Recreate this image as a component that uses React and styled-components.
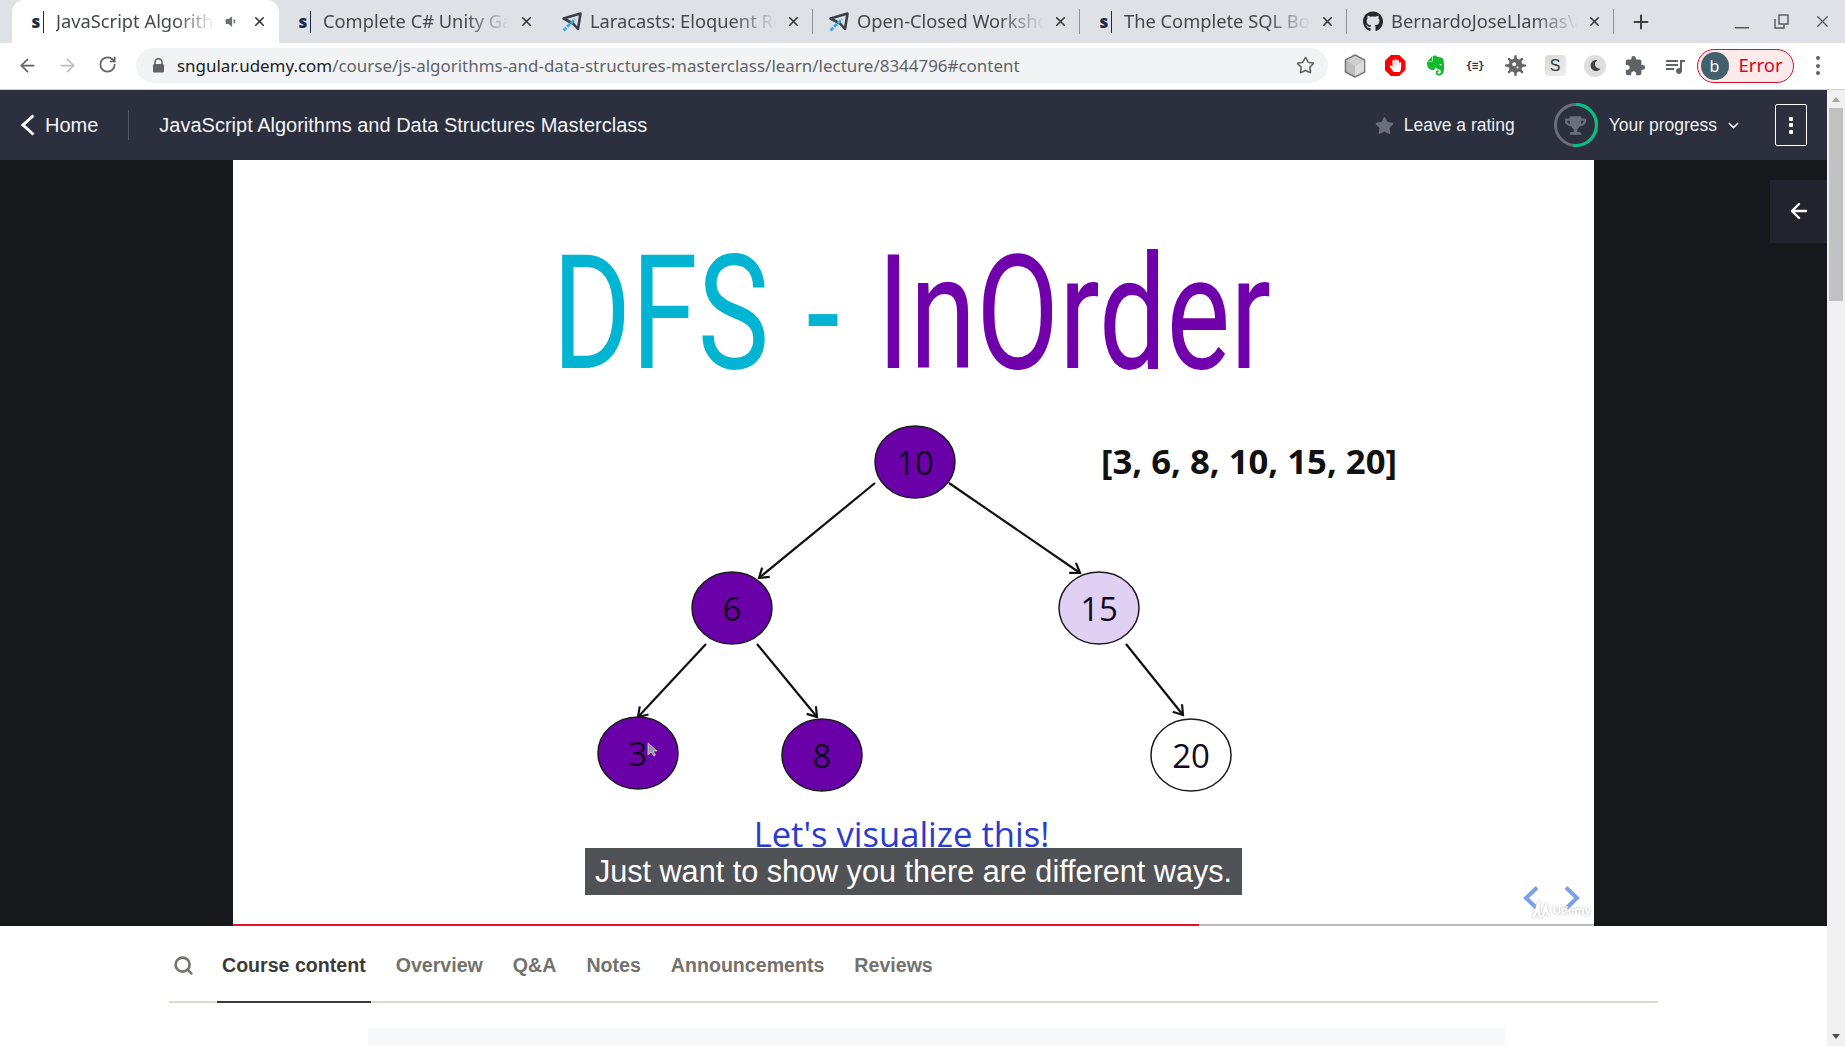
import React from 'react';
import styled, { createGlobalStyle } from 'styled-components';
import { ArrowLeft, ArrowRight, RotateCw, Star, Plus, X, ChevronDown, Search } from 'lucide-react';
import { FaEvernote, FaGithub, FaStar, FaTrophy, FaVirus, FaHandPaper, FaMoon, FaVolumeDown } from 'react-icons/fa';
import { MdQueueMusic, MdExtension } from 'react-icons/md';

const GlobalStyle = createGlobalStyle`
  html, body {
    margin: 0;
    padding: 0;
    background: #fff;
    overflow: hidden;
  }
  * {
    box-sizing: border-box;
  }
`;

const Page = styled.div`
  width: 1845px;
  height: 1046px;
  overflow: hidden;
  display: flex;
  flex-direction: column;
  font-family: 'Liberation Sans', Arial, sans-serif;
`;

/* browser chrome */
const TabStrip = styled.div`
  height: 43px;
  background: #dee1e6;
  display: flex;
  align-items: stretch;
  padding-left: 12px;
  flex-shrink: 0;
`;

const Tab = styled.div`
  position: relative;
  width: 267px;
  display: flex;
  align-items: center;
  padding-left: 16px;
  padding-right: 12px;
  background: ${(p) => (p.$active ? '#fff' : 'transparent')};
  border-radius: ${(p) => (p.$active ? '12px 12px 0 0' : '0')};
  &::after {
    content: '';
    display: ${(p) => (p.$divider ? 'block' : 'none')};
    position: absolute;
    right: 0;
    top: 9px;
    height: 25px;
    width: 1px;
    background: #8f9297;
  }
`;

const FavBox = styled.span`
  width: 20px;
  height: 22px;
  flex-shrink: 0;
  margin-right: 8px;
  display: flex;
  align-items: center;
  justify-content: center;
  color: #24292e;
`;

const SFav = styled.span`
  font-family: 'Open Sans', sans-serif;
  font-weight: 800;
  font-size: 17px;
  line-height: 22px;
  color: #1c2a48;
  padding-right: 3px;
  border-right: 1.5px solid #1c2a48;
`;

const TabTitle = styled.span`
  flex: 1;
  min-width: 0;
  overflow: hidden;
  white-space: nowrap;
  padding-bottom: 2px;
  font-family: 'Noto Sans', sans-serif;
  font-size: 18.3px;
  color: #45474b;
  -webkit-mask-image: linear-gradient(to right, #000 76%, transparent 100%);
  mask-image: linear-gradient(to right, #000 76%, transparent 100%);
`;

const TabSound = styled.span`
  width: 14px;
  margin: 0 5px 0 9px;
  display: flex;
  color: #6a6d71;
`;

const TabClose = styled.span`
  width: 16px;
  margin-left: 8px;
  display: flex;
  justify-content: center;
  color: #35373a;
`;

const NewTab = styled.div`
  width: 54px;
  display: flex;
  align-items: center;
  justify-content: center;
  color: #3c4043;
`;

const WindowControls = styled.div`
  margin-left: auto;
  display: flex;
  align-items: center;
  color: #55585c;
`;

const WindowButton = styled.span`
  width: ${(p) => p.$width}px;
  margin-left: ${(p) => p.$gap || 0}px;
  display: flex;
  justify-content: center;
`;

const Toolbar = styled.div`
  height: 47px;
  flex-shrink: 0;
  background: #fff;
  border-bottom: 1px solid #d0d1d3;
  display: flex;
  align-items: center;
  padding-bottom: 1px;
`;

const NavButtons = styled.div`
  width: 136px;
  flex-shrink: 0;
  padding-left: 7px;
  display: flex;
  color: #5f6368;
`;

const NavButton = styled.span`
  width: 40px;
  display: flex;
  justify-content: center;
  color: ${(p) => (p.$off ? '#bcbec1' : '#5f6368')};
`;

const Omnibox = styled.div`
  width: 1192px;
  height: 35px;
  flex-shrink: 0;
  background: #f1f3f4;
  border-radius: 18px;
  display: flex;
  align-items: center;
  padding: 0 13px 0 16px;
`;

const LockIcon = styled.svg`
  width: 13px;
  height: 15px;
  margin-right: 12px;
  flex-shrink: 0;
`;

const UrlText = styled.div`
  flex: 1;
  white-space: nowrap;
  font-family: 'Noto Sans', sans-serif;
  font-size: 16.95px;
  color: #5f6368;
`;

const UrlHost = styled.span`
  color: #202124;
`;

const Extensions = styled.div`
  margin-left: 7px;
  display: flex;
  align-items: center;
`;

const ExtSlot = styled.span`
  width: 40px;
  height: 24px;
  display: flex;
  align-items: center;
  justify-content: center;
  color: ${(p) => p.$color || '#666'};
`;

const StopSign = styled.span`
  width: 21px;
  height: 21px;
  display: flex;
  align-items: center;
  justify-content: center;
  background: #f00;
  color: #fff;
  clip-path: polygon(30% 0, 70% 0, 100% 30%, 100% 70%, 70% 100%, 30% 100%, 0 70%, 0 30%);
`;

const BraceGlyph = styled.span`
  font-family: 'DejaVu Sans Mono', monospace;
  font-size: 11px;
  font-weight: 700;
  color: #333;
  white-space: nowrap;
  letter-spacing: -0.5px;
`;

const SBadge = styled.span`
  width: 21px;
  height: 21px;
  border-radius: 4px;
  background: linear-gradient(135deg, #d8d8d8, #f0f0f0);
  color: #333;
  font-size: 16px;
  display: flex;
  align-items: center;
  justify-content: center;
`;

const MoonBadge = styled.span`
  width: 22px;
  height: 22px;
  border-radius: 50%;
  background: #dedede;
  color: #444;
  display: flex;
  align-items: center;
  justify-content: center;
`;

const ProfilePill = styled.div`
  margin-left: 2px;
  width: 97px;
  height: 34px;
  border-radius: 17px;
  background: #fdeaea;
  border: 1.5px solid #d9102a;
  display: flex;
  align-items: center;
  padding-left: 2.5px;
`;

const Avatar = styled.span`
  width: 28px;
  height: 28px;
  border-radius: 50%;
  background: #44606f;
  color: #fff;
  font-family: 'Noto Sans', sans-serif;
  font-size: 16px;
  display: flex;
  align-items: center;
  justify-content: center;
`;

const ProfileLabel = styled.span`
  margin-left: 10px;
  padding-bottom: 2px;
  font-family: 'Noto Sans', sans-serif;
  font-size: 18.5px;
  color: #d9031d;
`;

const MenuDots = styled.span`
  width: 4px;
  margin-left: 22px;
  display: flex;
  flex-direction: column;
  gap: 3.5px;
  & > i {
    display: block;
    width: 4px;
    height: 4px;
    border-radius: 50%;
    background: #5f6368;
  }
`;

/* page below the chrome */
const BodyRow = styled.div`
  flex: 1;
  min-height: 0;
  display: flex;
`;

const Content = styled.div`
  flex: 1;
  min-width: 0;
  display: flex;
  flex-direction: column;
  overflow: hidden;
`;

const CourseHeader = styled.header`
  height: 70px;
  flex-shrink: 0;
  background: #2c2f3d;
  color: #f4f4f6;
  display: flex;
  align-items: center;
  padding: 0 20px;
`;

const HomeLink = styled.div`
  display: flex;
  align-items: center;
  gap: 9px;
  font-size: 20px;
  padding-right: 30px;
  height: 30px;
  border-right: 1px solid #555866;
`;

const CourseTitle = styled.div`
  margin-left: 30px;
  font-size: 20px;
`;

const HeaderRight = styled.div`
  margin-left: auto;
  display: flex;
  align-items: center;
  font-size: 17.5px;
`;

const RatingLink = styled.div`
  display: flex;
  align-items: center;
  gap: 10px;
  color: #f0f0f2;
  & > svg {
    color: #6a6f7d;
  }
`;

const ProgressLink = styled.div`
  margin-left: 39px;
  display: flex;
  align-items: center;
  color: #f0f0f2;
`;

const ProgressRing = styled.div`
  position: relative;
  width: 44px;
  height: 44px;
  margin-right: 11px;
  display: flex;
  align-items: center;
  justify-content: center;
  color: #6a6f7d;
  & > svg:first-child {
    position: absolute;
    inset: 0;
  }
`;

const ProgressCaret = styled.span`
  margin-left: 8px;
  margin-right: 33px;
  display: flex;
`;

const KebabButton = styled.div`
  width: 32px;
  height: 42px;
  border: 1px solid #fff;
  border-radius: 2px;
  display: flex;
  flex-direction: column;
  align-items: center;
  justify-content: center;
  gap: 2.5px;
  & > i {
    display: block;
    width: 4px;
    height: 4px;
    background: #fff;
    border-radius: 1px;
  }
`;

const VideoArea = styled.section`
  position: relative;
  height: 766px;
  flex-shrink: 0;
  background: #17181c;
  display: flex;
  justify-content: center;
`;

const SidebarToggle = styled.div`
  position: absolute;
  top: 20px;
  right: 0;
  width: 57px;
  height: 63px;
  padding-bottom: 2px;
  background: #21242c;
  color: #fff;
  display: flex;
  align-items: center;
  justify-content: center;
`;

const Slide = styled.div`
  position: relative;
  width: 1361px;
  background: #fff;
  overflow: hidden;
  display: flex;
  flex-direction: column;
  align-items: center;
`;

const SlideTitle = styled.div`
  margin-top: 74px;
  height: 160px;
  line-height: 160px;
  padding-right: 5px;
  font-family: Roboto, sans-serif;
  font-size: 160px;
  font-weight: 400;
  white-space: nowrap;
  word-spacing: 10px;
  transform: scaleX(0.752);
  color: #00b4d2;
`;

const TitleAccent = styled.span`
  color: #7000ab;
`;

const Tree = styled.svg`
  margin-top: 26px;
  width: 1361px;
  height: 380px;
  flex-shrink: 0;
  display: block;
`;

const SlideNote = styled.div`
  margin-top: 12px;
  padding-right: 24px;
  font-family: 'Open Sans', sans-serif;
  font-size: 34.6px;
  line-height: 44px;
  color: #2a3bcf;
  white-space: nowrap;
`;

const Caption = styled.div`
  position: absolute;
  left: 352px;
  top: 688px;
  width: 657px;
  height: 47px;
  background: #515256;
  color: #fff;
  font-size: 30.6px;
  line-height: 47px;
  text-align: center;
  white-space: nowrap;
`;

const SlideArrows = styled.svg`
  position: absolute;
  right: 14px;
  bottom: 16px;
  width: 57px;
  height: 24px;
`;

const Watermark = styled.div`
  position: absolute;
  right: 3px;
  bottom: 6px;
  display: flex;
  align-items: center;
  gap: 2px;
  font-size: 11.5px;
  font-weight: 700;
  color: #fff;
  text-shadow: 0 0 3px #aaa;
  & > svg {
    filter: drop-shadow(0 0 1px #aaa);
  }
`;

const ProgressTrack = styled.div`
  position: absolute;
  left: 0;
  right: 0;
  bottom: 0;
  height: 2px;
  background: #bbb;
`;

const ProgressFill = styled.div`
  height: 100%;
  background: #e0102a;
`;

const TabsNav = styled.nav`
  margin: 0 169px;
  height: 77px;
  flex-shrink: 0;
  border-bottom: 2px solid #dcdacb;
  display: flex;
  align-items: stretch;
  gap: 20px;
`;

const SearchSlot = styled.div`
  width: 28px;
  padding-left: 4px;
  padding-top: 3px;
  display: flex;
  align-items: center;
  color: #73726c;
`;

const NavItem = styled.div`
  padding: 3px 5px 0;
  margin-bottom: -2px;
  display: flex;
  align-items: center;
  font-size: 19.6px;
  font-weight: 700;
  color: ${(p) => (p.$active ? '#3c3b37' : '#73726c')};
  border-bottom: 2px solid ${(p) => (p.$active ? '#3c3b37' : 'transparent')};
`;

const ContentStub = styled.div`
  margin: 25px 0 0 368px;
  width: 1137px;
  height: 40px;
  flex-shrink: 0;
  background: #f7f8fa;
`;

const Scrollbar = styled.div`
  width: 18px;
  flex-shrink: 0;
  background: #f1f1f1;
  display: flex;
  flex-direction: column;
  align-items: center;
`;

const ScrollUp = styled.div`
  margin-top: 7px;
  width: 0;
  height: 0;
  border-left: 4.5px solid transparent;
  border-right: 4.5px solid transparent;
  border-bottom: 5px solid #a3a3a3;
`;

const ScrollThumb = styled.div`
  margin-top: 6px;
  width: 14px;
  height: 193px;
  background: #c1c1c1;
`;

const ScrollDown = styled.div`
  margin-top: auto;
  margin-bottom: 7px;
  width: 0;
  height: 0;
  border-left: 4.5px solid transparent;
  border-right: 4.5px solid transparent;
  border-top: 5px solid #505050;
`;

const PlaneIcon = () => (
  <svg width="20" height="20" viewBox="0 0 20 20" fill="none">
    <path d="M1.5 6.5 L18.5 1.5 L16 17 L11 11.5 Z" stroke="#3a4048" strokeWidth="2.6" strokeLinejoin="round" />
    <path d="M1.5 18.5 L13 7" stroke="#3da8f0" strokeWidth="2.8" strokeDasharray="4 1.2" />
  </svg>
);

const CubeIcon = () => (
  <svg width="22" height="24" viewBox="0 0 22 24">
    <path d="M11 1 L20.5 6 V18 L11 23 L1.5 18 V6 Z" fill="#bdbdbd" stroke="#777" strokeWidth="1.6" strokeLinejoin="round" />
    <path d="M11 12 L20 6.5 V17.5 L11 22 Z" fill="#dcdcdc" />
    <path d="M11 12 L2 6.5 L11 2 L20 6.5 Z" fill="#cfcfcf" />
  </svg>
);

const RestoreIcon = () => (
  <svg width="15" height="15" viewBox="0 0 15 15" fill="none" stroke="#55585c" strokeWidth="1.4">
    <rect x="5" y="1" width="9" height="9" />
    <path d="M1 5 V14 H10 V10" />
  </svg>
);

const tabs = [
  { title: 'JavaScript Algorithms and Data', fav: 's', active: true },
  { title: 'Complete C# Unity Game Developer', fav: 's' },
  { title: 'Laracasts: Eloquent Relationships', fav: 'plane', divider: true },
  { title: 'Open-Closed Workshop Series', fav: 'plane', divider: true },
  { title: 'The Complete SQL Bootcamp', fav: 's', divider: true },
  { title: 'BernardoJoseLlamas\\algorithms', fav: 'github', divider: true },
];

const nodes = [
  { x: 915, y: 462, label: '10', fill: '#6a00a8' },
  { x: 732, y: 608, label: '6', fill: '#6a00a8' },
  { x: 1099, y: 608, label: '15', fill: '#e0d0f3' },
  { x: 638, y: 753, label: '3', fill: '#6a00a8' },
  { x: 822, y: 755, label: '8', fill: '#6a00a8' },
  { x: 1191, y: 755, label: '20', fill: '#fff' },
];

const edges = [
  [875, 483, 759, 578],
  [949, 483, 1080, 573],
  [706, 644, 638, 717],
  [757, 644, 817, 717],
  [1126, 644, 1183, 715],
];

const navItems = ['Course content', 'Overview', 'Q&A', 'Notes', 'Announcements', 'Reviews'];

const renderFav = (fav) => {
  if (fav === 's') return <SFav>s</SFav>;
  if (fav === 'plane') return <PlaneIcon />;
  return <FaGithub size={21} />;
};

export default function App() {
  return (
    <Page>
      <GlobalStyle />
      <TabStrip>
        {tabs.map((tab) => (
          <Tab key={tab.title} $active={tab.active} $divider={tab.divider}>
            <FavBox>{renderFav(tab.fav)}</FavBox>
            <TabTitle>{tab.title}</TabTitle>
            {tab.active && (
              <TabSound>
                <FaVolumeDown size={13} />
              </TabSound>
            )}
            <TabClose>
              <X size={15} strokeWidth={2.6} />
            </TabClose>
          </Tab>
        ))}
        <NewTab>
          <Plus size={22} strokeWidth={2.2} />
        </NewTab>
        <WindowControls>
          <WindowButton $width={34}>
            <svg width="14" height="16" viewBox="0 0 14 16">
              <rect x="0" y="13" width="14" height="1.5" fill="#55585c" />
            </svg>
          </WindowButton>
          <WindowButton $width={34} $gap={5}>
            <RestoreIcon />
          </WindowButton>
          <WindowButton $width={46} $gap={1}>
            <X size={19} strokeWidth={1.6} />
          </WindowButton>
        </WindowControls>
      </TabStrip>

      <Toolbar>
        <NavButtons>
          <NavButton>
            <ArrowLeft size={21} strokeWidth={2} />
          </NavButton>
          <NavButton $off>
            <ArrowRight size={21} strokeWidth={2} />
          </NavButton>
          <NavButton>
            <RotateCw size={19} strokeWidth={2.2} />
          </NavButton>
        </NavButtons>
        <Omnibox>
          <LockIcon viewBox="0 0 13 15">
            <path d="M3 6 V4.2 a3.5 3.5 0 0 1 7 0 V6" fill="none" stroke="#5f6368" strokeWidth="1.6" />
            <rect x="1" y="6" width="11" height="8.5" rx="1.2" fill="#5f6368" />
          </LockIcon>
          <UrlText>
            <UrlHost>sngular.udemy.com</UrlHost>/course/js-algorithms-and-data-structures-masterclass/learn/lecture/8344796#content
          </UrlText>
          <Star size={19} strokeWidth={2} color="#5f6368" />
        </Omnibox>
        <Extensions>
          <ExtSlot>
            <CubeIcon />
          </ExtSlot>
          <ExtSlot>
            <StopSign>
              <FaHandPaper size={13} />
            </StopSign>
          </ExtSlot>
          <ExtSlot $color="#14b92e">
            <FaEvernote size={23} />
          </ExtSlot>
          <ExtSlot>
            <BraceGlyph>{'{≡}'}</BraceGlyph>
          </ExtSlot>
          <ExtSlot>
            <FaVirus size={21} />
          </ExtSlot>
          <ExtSlot>
            <SBadge>S</SBadge>
          </ExtSlot>
          <ExtSlot>
            <MoonBadge>
              <FaMoon size={11} />
            </MoonBadge>
          </ExtSlot>
          <ExtSlot $color="#5f6368">
            <MdExtension size={22} />
          </ExtSlot>
          <ExtSlot $color="#5f6368">
            <MdQueueMusic size={24} />
          </ExtSlot>
        </Extensions>
        <ProfilePill>
          <Avatar>b</Avatar>
          <ProfileLabel>Error</ProfileLabel>
        </ProfilePill>
        <MenuDots>
          <i />
          <i />
          <i />
        </MenuDots>
      </Toolbar>

      <BodyRow>
        <Content>
          <CourseHeader>
            <HomeLink>
              <svg width="16" height="22" viewBox="0 0 16 22" fill="none" stroke="#fff" strokeWidth="3">
                <path d="M13.5 1.5 L3 11 L13.5 20.5" />
              </svg>
              Home
            </HomeLink>
            <CourseTitle>JavaScript Algorithms and Data Structures Masterclass</CourseTitle>
            <HeaderRight>
              <RatingLink>
                <FaStar size={19} />
                Leave a rating
              </RatingLink>
              <ProgressLink>
                <ProgressRing>
                  <svg width="44" height="44" viewBox="0 0 44 44" fill="none" strokeWidth="3">
                    <circle cx="22" cy="22" r="20.5" stroke="#686f7a" />
                    <circle
                      cx="22"
                      cy="22"
                      r="20.5"
                      stroke="#00c389"
                      strokeDasharray="67 129"
                      transform="rotate(-90 22 22)"
                    />
                  </svg>
                  <FaTrophy size={21} />
                </ProgressRing>
                Your progress
                <ProgressCaret>
                  <ChevronDown size={17} strokeWidth={2} />
                </ProgressCaret>
              </ProgressLink>
              <KebabButton>
                <i />
                <i />
                <i />
              </KebabButton>
            </HeaderRight>
          </CourseHeader>

          <VideoArea>
            <Slide>
              <SlideTitle>
                DFS - <TitleAccent>InOrder</TitleAccent>
              </SlideTitle>
              <Tree viewBox="233 420 1361 380">
                <defs>
                  <marker id="head" markerUnits="userSpaceOnUse" markerWidth="16" markerHeight="16" refX="12" refY="8" orient="auto">
                    <path d="M3 2 L12 8 L3 14" fill="none" stroke="#111" strokeWidth="2.2" />
                  </marker>
                </defs>
                {edges.map(([x1, y1, x2, y2]) => (
                  <line key={x1 + '-' + x2} x1={x1} y1={y1} x2={x2} y2={y2} stroke="#111" strokeWidth="2.2" markerEnd="url(#head)" />
                ))}
                {nodes.map((node) => (
                  <g key={node.label}>
                    <ellipse cx={node.x} cy={node.y} rx="40" ry="36" fill={node.fill} stroke="#1a1a1a" strokeWidth="1.5" />
                    <text x={node.x} y={node.y + 13} textAnchor="middle" fontFamily="Open Sans, sans-serif" fontSize="33" fill="#120a20">
                      {node.label}
                    </text>
                  </g>
                ))}
                <path d="M648 743 L648 755 L651 752 L654 756 L655.5 755 L653 751 L657 751 Z" fill="#999" stroke="#eee" strokeWidth="0.6" />
                <text x="1101" y="474" fontFamily="Open Sans, sans-serif" fontWeight="700" fontSize="34.7" fill="#111">
                  [3, 6, 8, 10, 15, 20]
                </text>
              </Tree>
              <SlideNote>Let's visualize this!</SlideNote>
              <Caption>Just want to show you there are different ways.</Caption>
              <SlideArrows viewBox="0 0 57 24" fill="none" stroke="#7b9fe8" strokeWidth="4">
                <path d="M14 1.5 L3 12 L14 22.5" />
                <path d="M43 1.5 L54 12 L43 22.5" />
              </SlideArrows>
              <Watermark>
                <svg width="20" height="20" viewBox="0 0 18 18" fill="none" stroke="#fff" strokeWidth="2.4">
                  <path d="M2 16 C5 10 6 5 7 2 C6 9 7 15 9 15 C12 15 13 6 14 3 C13 8 14 13 17 13" />
                </svg>
                Udemy
              </Watermark>
              <ProgressTrack>
                <ProgressFill style={{ width: `${(966 / 1361) * 100}%` }} />
              </ProgressTrack>
            </Slide>
            <SidebarToggle>
              <ArrowLeft size={24} strokeWidth={2.4} />
            </SidebarToggle>
          </VideoArea>

          <TabsNav>
            <SearchSlot>
              <Search size={21} strokeWidth={3} />
            </SearchSlot>
            {navItems.map((item, index) => (
              <NavItem key={item} $active={index === 0}>
                {item}
              </NavItem>
            ))}
          </TabsNav>
          <ContentStub />
        </Content>
        <Scrollbar>
          <ScrollUp />
          <ScrollThumb />
          <ScrollDown />
        </Scrollbar>
      </BodyRow>
    </Page>
  );
}
